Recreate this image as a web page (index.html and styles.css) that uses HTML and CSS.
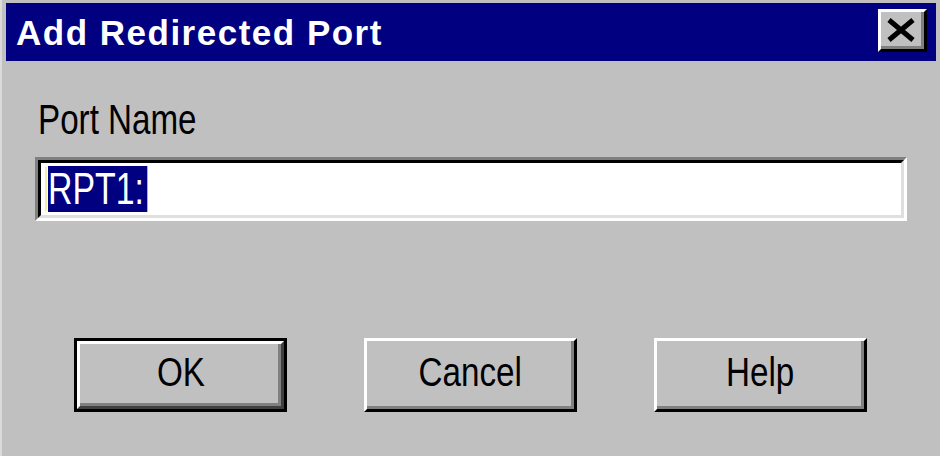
FILE: index.html
```html
<!DOCTYPE html>
<html>
<head>
<meta charset="utf-8">
<link rel="stylesheet" href="styles.css">
</head>
<body>
<div class="window">
  <div class="titlebar">
    <span class="title">Add Redirected Port</span>
    <div class="close">
      <svg width="30" height="24" viewBox="0 0 30 24">
        <path d="M3 2 L27 22 M27 2 L3 22" stroke="#000" stroke-width="5" fill="none"/>
      </svg>
    </div>
  </div>
  <div class="content">
    <div class="label"><span class="narrow">Port Name</span></div>
    <div class="field">
      <div class="field-inner">
        <span class="caret"></span><span class="sel">RPT1:</span>
      </div>
    </div>
    <div class="buttons">
      <div class="btn default"><div class="bevel"><span class="btn-text">OK</span></div></div>
      <div class="btn"><div class="bevel"><span class="btn-text">Cancel</span></div></div>
      <div class="btn"><div class="bevel"><span class="btn-text">Help</span></div></div>
    </div>
  </div>
</div>
</body>
</html>
```

FILE: styles.css
```css
html, body {
  margin: 0;
  padding: 0;
  background: #c0c0c0;
}
.window {
  width: 940px;
  height: 456px;
  box-sizing: border-box;
  border-left: 2px solid #dadada;
  padding: 3px 4px 0 4px;
  background: #c0c0c0;
  font-family: "Liberation Sans", Arial, sans-serif;
  overflow: hidden;
}
.titlebar {
  height: 58px;
  background: #000080;
  display: flex;
  align-items: center;
  justify-content: space-between;
  padding: 0 9px 0 10px;
}
.title {
  color: #fff;
  font-weight: bold;
  font-size: 35px;
  letter-spacing: 1.5px;
  line-height: 1;
}
.close {
  width: 49px;
  height: 43px;
  box-sizing: border-box;
  border: 3px solid;
  border-color: #fff #000 #000 #fff;
  box-shadow: inset -3px -3px #808080;
  background: #c0c0c0;
  display: flex;
  align-items: center;
  justify-content: center;
  margin-top: -3px;
}
.close svg {
  margin: 0 3px 2px 0;
}
.content {
  padding: 0 29px;
}
.label {
  margin-top: 38px;
  margin-left: 3px;
  font-size: 42px;
  line-height: 42px;
  height: 42px;
  color: #000;
}
.narrow {
  display: inline-block;
  transform: scaleX(0.79);
  transform-origin: left center;
  white-space: nowrap;
}
.field {
  margin-top: 16px;
  border: 3px solid;
  border-color: #808080 #fff #fff #808080;
}
.field-inner {
  height: 52px;
  border: 3px solid;
  border-color: #000 #dfdfdf #dfdfdf #000;
  background: #fff;
  display: flex;
  align-items: center;
  padding-left: 4px;
}
.caret {
  width: 2px;
  height: 44px;
  background: #f4f0a8;
  margin-right: 1px;
}
.sel {
  display: inline-block;
  background: #000080;
  color: #fff;
  font-size: 44px;
  line-height: 46px;
  height: 46px;
  padding-right: 4px;
  transform: scaleX(0.77);
  transform-origin: left center;
  white-space: nowrap;
}
.buttons {
  display: flex;
  gap: 77px;
  margin-top: 117px;
  padding-left: 39px;
}
.btn {
  width: 213px;
  height: 74px;
  box-sizing: border-box;
  display: flex;
}
.btn.default {
  border: 3px solid #000;
}
.bevel {
  flex: 1;
  border: 3px solid;
  border-color: #fff #000 #000 #fff;
  box-shadow: inset -3px -3px #808080;
  background: #c0c0c0;
  display: flex;
  align-items: center;
  justify-content: center;
  color: #000;
  padding-bottom: 6px;
}
.btn.default .bevel {
  border-color: #fff #404040 #404040 #fff;
}
.btn-text {
  display: inline-block;
  font-size: 40px;
  line-height: 1;
  transform: scaleX(0.83);
  white-space: nowrap;
}
```
